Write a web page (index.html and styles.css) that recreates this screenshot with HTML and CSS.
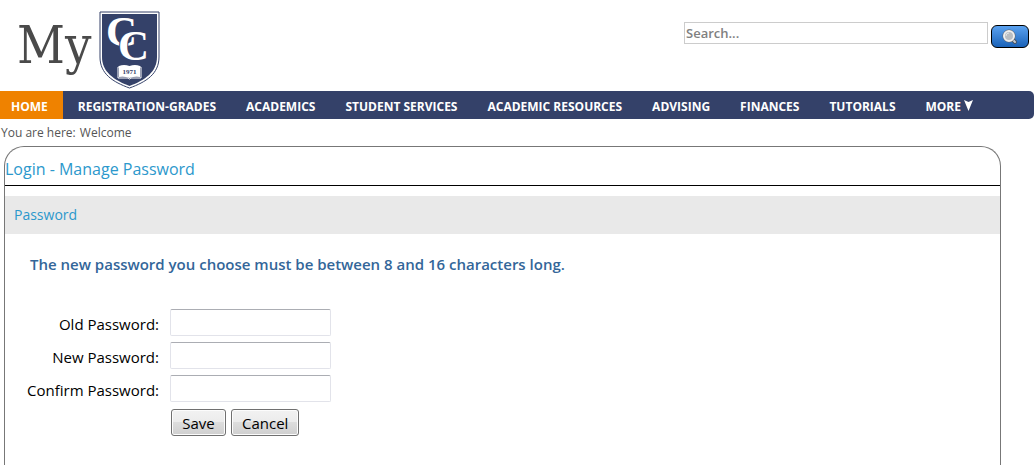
FILE: index.html
```html
<!DOCTYPE html>
<html lang="en">
<head>
    <meta charset="UTF-8">
    <meta name="viewport" content="width=device-width, initial-scale=1.0">
    <title>Login - Manage Password</title>
    <link rel="stylesheet" href="styles.css">
</head>
<body>
    <header class="header">
        <a href="#" class="logo">
            <span class="logo-text">My</span>
            <svg class="logo-shield" width="62" height="78" viewBox="0 0 62 78" role="img" aria-label="CC 1971">
                <path d="M1 1H60V46C60 63 47 71 30.500 77C14 71 1 63 1 46Z" fill="#fff" stroke="#344169" stroke-width="1"/>
                <path d="M3 3H58V46C58 61 46 69 30.500 75C15 69 3 61 3 46Z" fill="#344169"/>
                <text x="7" y="35" class="shield-letter">C</text>
                <text x="19" y="49" class="shield-letter shield-letter-front">C</text>
                <path d="M20 55Q25 53 30.500 55Q36 53 41 55V66Q36 65 30.500 67Q25 65 20 66Z" fill="#fff"/>
                <path d="M20 56H19V67H29L30.500 68L32 67H42V56H41" fill="none" stroke="#fff" stroke-width="1"/>
                <text x="30.500" y="63" text-anchor="middle" class="shield-year">1971</text>
            </svg>
        </a>
        <form class="search">
            <input type="text" class="search-input" placeholder="Search..." aria-label="Search">
            <button type="button" class="search-btn" aria-label="Search">
                <svg width="16" height="16" viewBox="0 0 16 16">
                    <path d="M11 11L13 13" stroke="#4b5563" stroke-width="4" stroke-linecap="round"/>
                    <path d="M11 11L13 13" stroke="#c9ccd0" stroke-width="2" stroke-linecap="round"/>
                    <circle cx="7" cy="7" r="5" fill="#b9bdc1" stroke="#5d6269" stroke-width="3"/>
                    <circle cx="7" cy="7" r="5" fill="#b9bdc1" stroke="#eeeeee" stroke-width="2"/>
                    <path d="M4 7A3 3 0 0 1 7 4" fill="none" stroke="#e2e4e6" stroke-width="1"/>
                </svg>
            </button>
        </form>
    </header>

    <nav class="nav">
        <a href="#" class="active">HOME</a>
        <a href="#">REGISTRATION-GRADES</a>
        <a href="#">ACADEMICS</a>
        <a href="#">STUDENT SERVICES</a>
        <a href="#">ACADEMIC RESOURCES</a>
        <a href="#">ADVISING</a>
        <a href="#">FINANCES</a>
        <a href="#">TUTORIALS</a>
        <a href="#">MORE
            <svg width="9" height="11" viewBox="0 0 9 11"><path d="M0 0L4.500 2L9 0L4.500 11Z" fill="#fff"/></svg>
        </a>
    </nav>

    <div class="breadcrumb">You are here: <span>Welcome</span></div>

    <main class="panel">
        <h1>Login - Manage Password</h1>
        <h2>Password</h2>
        <form class="password-form">
            <p class="note">The new password you choose must be between 8 and 16 characters long.</p>
            <div class="fields">
                <label for="oldPassword">Old Password:</label>
                <input type="password" id="oldPassword">
                <label for="newPassword">New Password:</label>
                <input type="password" id="newPassword">
                <label for="confirmPassword">Confirm Password:</label>
                <input type="password" id="confirmPassword">
                <div class="buttons">
                    <button type="button" class="btn">Save</button>
                    <button type="button" class="btn">Cancel</button>
                </div>
            </div>
        </form>
    </main>
</body>
</html>
```
FILE: styles.css
```css
* { box-sizing: border-box; }
html { height: 100%; }
body {
    display: flex;
    flex-direction: column;
    min-height: 100%;
    margin: 0;
    font-family: "Open Sans", "Noto Sans", sans-serif;
    font-size: 15px;
    color: #000;
    background: #fff;
}

/* Header */
.header {
    display: flex;
    justify-content: space-between;
    align-items: flex-start;
    padding: 11px 5px 2px 17px;
}
.logo {
    display: flex;
    gap: 8px;
    color: #4a4a4a;
    text-decoration: none;
}
.logo-text {
    font-family: "DejaVu Serif Condensed", "DejaVu Serif", serif;
    font-stretch: condensed;
    font-size: 52px;
    line-height: 69px;
}
.shield-letter {
    font-family: "Liberation Serif", serif;
    font-size: 43px;
    font-weight: bold;
    fill: #fff;
}
.shield-letter-front {
    stroke: #344169;
    stroke-width: 2px;
    paint-order: stroke;
}
.shield-year {
    font-family: "Liberation Serif", serif;
    font-size: 7px;
    font-weight: bold;
    fill: #344169;
}
.search {
    display: flex;
    gap: 3px;
    padding-top: 11px;
}
.search-input {
    width: 304px;
    height: 22px;
    padding: 0 1px;
    border: 1px solid #ccc;
    font-family: inherit;
    font-size: 13px;
    font-weight: 600;
}
.search-input::placeholder { color: #808080; }
.search-btn {
    display: flex;
    justify-content: center;
    align-items: center;
    width: 38px;
    height: 23px;
    margin-top: 3px;
    padding: 0;
    border: 1px solid #000;
    border-radius: 6px;
    background: linear-gradient(#5ba2f0, #1a62b8);
}

/* Navigation */
.nav {
    display: flex;
    background: #344169;
    border-radius: 0 5px 5px 0;
}
.nav a {
    padding: 4px 15px 0;
    font-size: 12px;
    font-weight: 700;
    line-height: 24px;
    color: #fff;
    text-decoration: none;
    white-space: nowrap;
}
.nav a.active {
    padding-left: 11px;
    background: #ef8200;
}
.breadcrumb {
    padding: 5px 1px;
    font-size: 12px;
    line-height: 17px;
    color: #555;
}
.breadcrumb span { margin-left: 1px; }

/* Content */
.panel {
    flex: 1;
    margin: 0 33px 0 4px;
    padding-top: 8px;
    border: 1px solid #777;
    border-bottom: 0;
    border-radius: 20px 20px 0 0;
}
h1, h2 {
    margin: 0;
    font-weight: 400;
    color: #2c98cc;
}
h1 {
    padding-bottom: 2px;
    border-bottom: 1px solid #000;
    font-size: 16px;
    line-height: 28px;
}
h2 {
    margin-top: 10px;
    padding: 0 9px;
    background: #e9e9e9;
    font-size: 14px;
    line-height: 38px;
}
.password-form { padding: 20px 20px 28px; }
.note {
    margin: 0 0 34px;
    padding-left: 5px;
    font-weight: 600;
    line-height: 21px;
    color: #336699;
}
.fields {
    display: grid;
    grid-template-columns: 134px 161px;
    column-gap: 11px;
    row-gap: 6px;
    align-items: center;
}
.fields label {
    padding-top: 2px;
    text-align: right;
    white-space: nowrap;
}
.fields input {
    width: 161px;
    height: 27px;
    padding: 2px;
    border: 1px solid #e2e3ea;
    border-top-color: #abadb3;
    border-radius: 2px;
    background: #fff;
}
.buttons {
    grid-column: 2;
    display: flex;
    gap: 5px;
    padding: 1px 0 0 1px;
}
.btn {
    min-width: 55px;
    height: 27px;
    padding: 0 10px;
    border: 1px solid #707070;
    border-radius: 3px;
    background: linear-gradient(#f2f2f2, #ebebeb 50%, #dddddd 50%, #cfcfcf);
    box-shadow: inset 0 0 0 1px #fcfcfc;
    font-family: inherit;
    font-size: 15px;
    white-space: nowrap;
}
```
